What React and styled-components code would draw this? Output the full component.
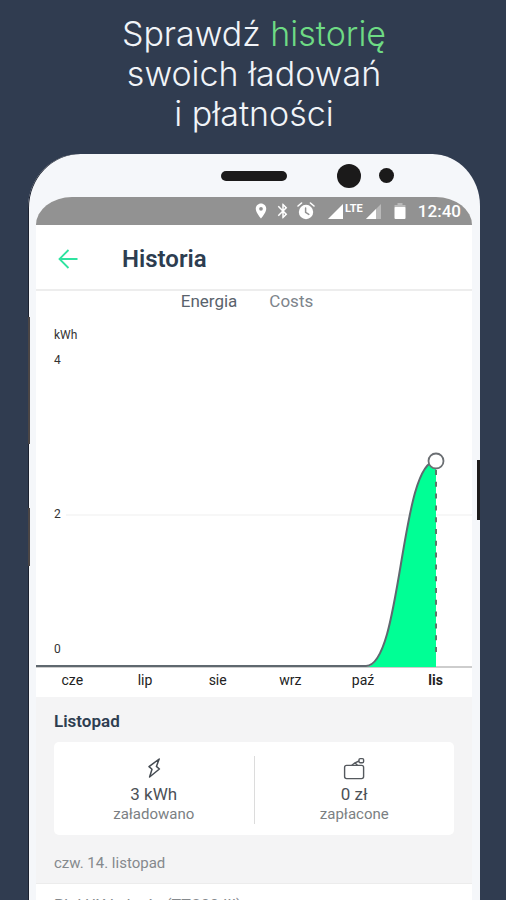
import React, { useState } from "react";
import styled, { createGlobalStyle } from "styled-components";
import { MdLocationOn, MdBluetooth } from "react-icons/md";

const months = ["cze", "lip", "sie", "wrz", "paź", "lis"];

const App = () => {
  const [tab, setTab] = useState("Energia");

  return (
    <>
      <GlobalStyle />
      <Page>
        <Headline>
          Sprawdź <Accent>historię</Accent>
          <br />
          swoich ładowań
          <br />i płatności
        </Headline>
        <Phone>
          <SideButton $side="left" $top={163} $height={127} />
          <SideButton $side="left" $top={354} $height={58} />
          <SideButton $side="right" $top={306} $height={60} />
          <Bezel>
            <Speaker />
            <Lens $size={24} />
            <Lens $size={15} />
          </Bezel>
          <Screen>
            <StatusBar>
              <StatusIcons>
                <MdLocationOn size={18} />
                <MdBluetooth size={18} />
                <AlarmIcon />
              </StatusIcons>
              <SignalIcon />
              <BatteryIcon />
              <Clock>12:40</Clock>
            </StatusBar>
            <Header>
              <BackButton aria-label="Wstecz">
                <BackIcon />
              </BackButton>
              <Title>Historia</Title>
            </Header>
            <Tabs role="tablist">
              {["Energia", "Costs"].map((name) => (
                <Tab
                  key={name}
                  role="tab"
                  aria-selected={tab === name}
                  $active={tab === name}
                  onClick={() => setTab(name)}
                >
                  {name}
                </Tab>
              ))}
            </Tabs>
            <EnergyChart />
            <Months>
              {months.map((month) => (
                <Month key={month} $active={month === "lis"}>
                  {month}
                </Month>
              ))}
            </Months>
            <Summary>
              <MonthTitle>Listopad</MonthTitle>
              <Card>
                <Stat>
                  <BoltIcon />
                  <Value>3 kWh</Value>
                  <Label>załadowano</Label>
                </Stat>
                <Divider />
                <Stat>
                  <WalletIcon />
                  <Value>0 zł</Value>
                  <Label>zapłacone</Label>
                </Stat>
              </Card>
              <Day>czw. 14. listopad</Day>
            </Summary>
            <Entry>PL-LUX Luboń - (TTC00 III)</Entry>
          </Screen>
        </Phone>
      </Page>
    </>
  );
};

export default App;

const AlarmIcon = () => (
  <svg width="20" height="20" viewBox="0 0 20 20" fill="none" strokeLinecap="round">
    <circle cx="10" cy="11" r="7.2" fill="#fff" />
    <path d="M2 5 L5.6 2 M18 5 L14.4 2" stroke="#fff" strokeWidth="1.6" />
    <path d="M9.6 7 V11.4 L12.8 13.4" stroke="#929292" strokeWidth="1.5" />
  </svg>
);

const SignalIcon = () => (
  <svg width="54" height="20" viewBox="0 0 54 20">
    <path d="M0 18 L15 3 V18 Z" fill="#fff" />
    <text x="17" y="11" fill="#fff" fontFamily="Roboto, sans-serif" fontSize="11" fontWeight="700">
      LTE
    </text>
    <path d="M38 18 L53 3 V18 Z" fill="#b9b9b9" />
    <path d="M38 18 L48 8 V18 Z" fill="#fff" />
  </svg>
);

const BatteryIcon = () => (
  <svg width="12" height="18" viewBox="0 0 12 18">
    <path d="M3.5 1 H8.5 V3 H11.5 V6 H0.5 V3 H3.5 Z" fill="#b9b9b9" />
    <rect x="0.5" y="5" width="11" height="12" rx="1" fill="#fff" />
  </svg>
);

const BackIcon = () => (
  <svg width="20" height="20" viewBox="0 0 20 20" fill="none" stroke="#2fe3a0" strokeWidth="1.8">
    <path d="M19.5 10 H1.5 M10.5 1 L1.5 10 L10.5 19" />
  </svg>
);

const BoltIcon = () => (
  <svg width="24" height="24" viewBox="0 0 24 24" fill="none" stroke="#454b52" strokeWidth="1.5" strokeLinejoin="round">
    <path d="M17.2 3 L7 10.6 L10 13.2 L7.6 21 L17.4 13 L14.4 10.4 Z" />
  </svg>
);

const WalletIcon = () => (
  <svg width="24" height="24" viewBox="0 0 24 24" fill="none" stroke="#55595e" strokeWidth="1.4" strokeLinejoin="round">
    <rect x="2.6" y="9.4" width="19" height="13.2" rx="2" />
    <rect x="17" y="2.6" width="4.6" height="4.2" rx="1.2" />
    <path d="M9.8 9.2 L13 6.8 L15.4 9.2 M13 6.8 L17 5" />
  </svg>
);

const EnergyChart = () => (
  <Chart viewBox="0 -5 436 357" role="img" aria-label="Energia">
    <line x1="30" y1="199" x2="436" y2="199" stroke="#efefef" />
    <line x1="0" y1="351" x2="436" y2="351" stroke="#9b9b9b" />
    <path d="M330 351 C366 351 364 145 400 145 V351 Z" fill="#00ff95" />
    <line x1="400" y1="154" x2="400" y2="338" stroke="#5c7868" strokeWidth="2" strokeDasharray="5 6.8" />
    <path d="M0 350 H330 C366 350 364 145 400 145" fill="none" stroke="#5f686f" strokeWidth="2" />
    <circle cx="400" cy="145" r="7.5" fill="#fff" stroke="#6b6f73" strokeWidth="1.8" />
    <text x="18" y="23">kWh</text>
    <text x="18" y="48">4</text>
    <text x="18" y="202">2</text>
    <text x="18" y="337">0</text>
  </Chart>
);

const GlobalStyle = createGlobalStyle`
  * {
    box-sizing: border-box;
  }

  body {
    margin: 0;
    font-family: Roboto, sans-serif;
    background-color: #303c50;
  }

  button {
    padding: 0;
    border: none;
    background: none;
    font-family: inherit;
    cursor: pointer;
  }
`;

const Page = styled.div`
  display: flex;
  flex-direction: column;
  height: 100vh;
  overflow: hidden;
  padding: 0 26px 0 28px;
`;

const Headline = styled.h1`
  margin: 0;
  padding: 14px 0 20px;
  color: #f1f4f8;
  font-family: Inter, sans-serif;
  font-size: 34px;
  font-weight: 300;
  line-height: 40px;
  text-align: center;
`;

const Accent = styled.span`
  color: #6edb84;
`;

const Phone = styled.div`
  position: relative;
  flex: 1 0 auto;
  padding: 0 8px;
  border-top-left-radius: 52px 54px;
  border-top-right-radius: 48px 52px;
  background-color: #f5f7fa;
  box-shadow: inset 1px 0 #1c2230;
`;

const SideButton = styled.span`
  position: absolute;
  top: ${({ $top }) => $top}px;
  ${({ $side }) => $side}: 0;
  width: ${({ $side }) => ($side === "left" ? 2 : 3)}px;
  height: ${({ $height }) => $height}px;
  background-color: ${({ $side }) => ($side === "left" ? "#4b4646" : "#1b1a1a")};
`;

const Bezel = styled.div`
  display: flex;
  justify-content: flex-end;
  align-items: center;
  gap: 18px;
  height: 43px;
  padding-right: 78px;
`;

const Speaker = styled.span`
  width: 66px;
  height: 10px;
  margin-right: 32px;
  border-radius: 5px;
  background-color: #1b1a1a;
`;

const Lens = styled.span`
  width: ${({ $size }) => $size}px;
  height: ${({ $size }) => $size}px;
  border-radius: 50%;
  background-color: #1b1a1a;
`;

const Screen = styled.main`
  overflow: hidden;
  border-radius: 36px 36px 0 0 / 28px 28px 0 0;
  background-color: #fff;
`;

const StatusBar = styled.div`
  display: flex;
  justify-content: flex-end;
  align-items: center;
  gap: 12px;
  height: 28px;
  padding-right: 11px;
  background-color: #929292;
  color: #fff;
`;

const StatusIcons = styled.div`
  display: flex;
  align-items: center;
  gap: 4px;
`;

const Clock = styled.span`
  font-size: 17px;
  font-weight: 500;
`;

const Header = styled.header`
  display: flex;
  align-items: center;
  gap: 44px;
  height: 66px;
  padding: 4px 22px 0;
  border-bottom: 2px solid #ededed;
`;

const BackButton = styled.button`
  display: flex;
`;

const Title = styled.h2`
  margin: 0;
  color: #2d3d50;
  font-size: 24px;
  font-weight: 600;
`;

const Tabs = styled.div`
  display: flex;
  justify-content: center;
  gap: 32px;
  padding-right: 14px;
`;

const Tab = styled.button`
  color: ${({ $active }) => ($active ? "#59626c" : "#7d848b")};
  font-size: 17px;
  line-height: 20px;
`;

const Chart = styled.svg`
  display: block;
  width: 100%;

  text {
    fill: #333;
    font-size: 12px;
  }
`;

const Months = styled.div`
  display: grid;
  grid-template-columns: repeat(6, 1fr);
  padding: 3px 0 8px;
`;

const Month = styled.span`
  color: #222;
  font-size: 14px;
  font-weight: ${({ $active }) => ($active ? 700 : 400)};
  line-height: 18px;
  text-align: center;
`;

const Summary = styled.section`
  padding: 14px 18px 10px;
  border-bottom: 1px solid #ececec;
  background-color: #f4f4f5;
`;

const MonthTitle = styled.h3`
  margin: 0;
  color: #2d3d50;
  font-size: 17px;
  font-weight: 600;
  line-height: 20px;
`;

const Card = styled.div`
  display: flex;
  align-items: center;
  margin: 11px 0 18px;
  padding: 14px 0 11px;
  border-radius: 5px;
  background-color: #fff;
`;

const Stat = styled.div`
  flex: 1;
  display: flex;
  flex-direction: column;
  align-items: center;
`;

const Divider = styled.span`
  align-self: stretch;
  width: 1px;
  background-color: #dcdcdc;
`;

const Value = styled.strong`
  margin-top: 4px;
  color: #4c5157;
  font-size: 17px;
  font-weight: 400;
  line-height: 20px;
`;

const Label = styled.span`
  color: #7b7f83;
  font-size: 15px;
  line-height: 20px;
`;

const Day = styled.p`
  margin: 0;
  color: #85898d;
  font-size: 15px;
  line-height: 20px;
`;

const Entry = styled.p`
  margin: 0;
  padding: 12px 18px;
  color: #85898d;
  font-size: 16px;
  line-height: 20px;
`;
